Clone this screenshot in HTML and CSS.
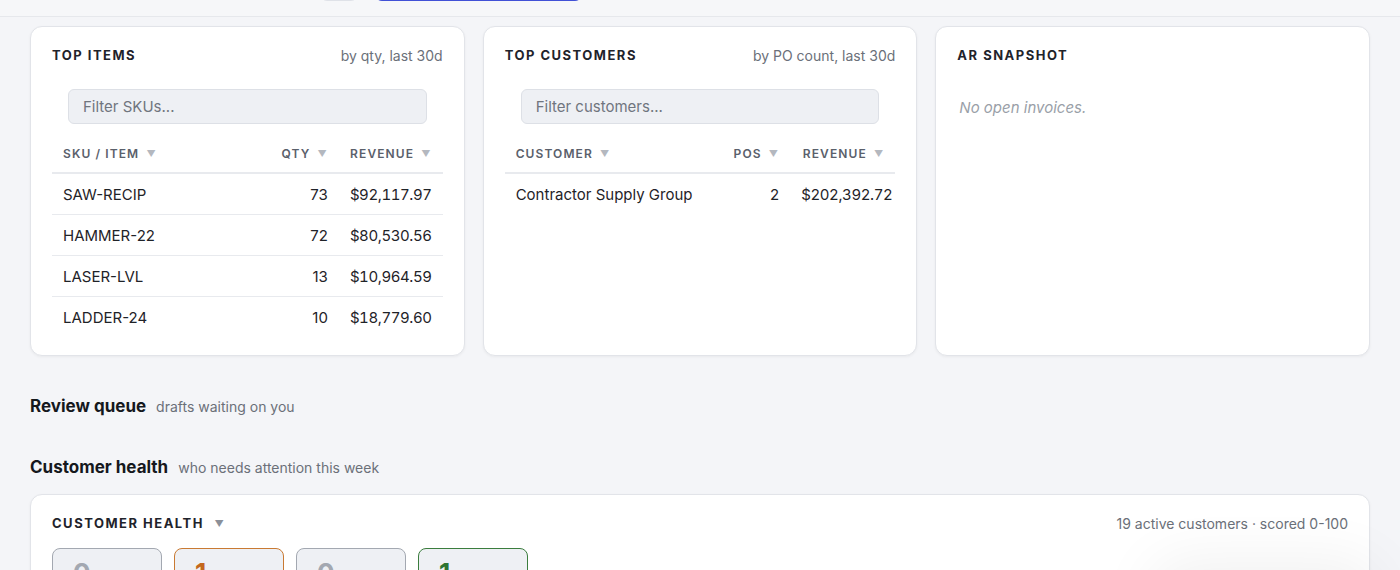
FILE: index.html
```html
<!DOCTYPE html>
<html lang="en">
<head>
    <meta charset="UTF-8">
    <meta name="viewport" content="width=device-width, initial-scale=1.0">
    <title>Sales Dashboard</title>
    <link rel="stylesheet" href="styles.css">
</head>
<body>

    <header class="topbar">
        <div class="topbar-actions">
            <button class="btn-ghost" type="button">↻</button>
            <button class="btn-primary" type="button">New purchase order</button>
        </div>
    </header>

    <main class="page">
        <div class="card-row">
            <section class="card">
                <div class="card-head">
                    <h3 class="card-title">Top items</h3>
                    <span class="card-note">by qty, last 30d</span>
                </div>
                <input class="filter" type="text" placeholder="Filter SKUs...">
                <table class="data">
                    <thead>
                        <tr>
                            <th>SKU / Item <span class="caret">▼</span></th>
                            <th class="num">Qty <span class="caret">▼</span></th>
                            <th class="num money">Revenue <span class="caret">▼</span></th>
                        </tr>
                    </thead>
                    <tbody>
                        <tr><td>SAW-RECIP</td><td class="num">73</td><td class="num money">$92,117.97</td></tr>
                        <tr><td>HAMMER-22</td><td class="num">72</td><td class="num money">$80,530.56</td></tr>
                        <tr><td>LASER-LVL</td><td class="num">13</td><td class="num money">$10,964.59</td></tr>
                        <tr><td>LADDER-24</td><td class="num">10</td><td class="num money">$18,779.60</td></tr>
                    </tbody>
                </table>
            </section>

            <section class="card">
                <div class="card-head">
                    <h3 class="card-title">Top customers</h3>
                    <span class="card-note">by PO count, last 30d</span>
                </div>
                <input class="filter" type="text" placeholder="Filter customers...">
                <table class="data tight">
                    <thead>
                        <tr>
                            <th>Customer <span class="caret">▼</span></th>
                            <th class="num">POs <span class="caret">▼</span></th>
                            <th class="num money">Revenue <span class="caret">▼</span></th>
                        </tr>
                    </thead>
                    <tbody>
                        <tr><td>Contractor Supply Group</td><td class="num">2</td><td class="num money">$202,392.72</td></tr>
                    </tbody>
                </table>
            </section>

            <section class="card">
                <div class="card-head">
                    <h3 class="card-title">AR snapshot</h3>
                </div>
                <p class="empty">No open invoices.</p>
            </section>
        </div>

        <div class="section-head review">
            <h2>Review queue</h2>
            <span>drafts waiting on you</span>
        </div>

        <div class="section-head health">
            <h2>Customer health</h2>
            <span>who needs attention this week</span>
        </div>

        <section class="card health-card">
            <div class="card-head">
                <h3 class="card-title">Customer health <span class="caret dark">▼</span></h3>
                <span class="card-note">19 active customers · scored 0-100</span>
            </div>
            <div class="tiles">
                <div class="tile grey"><b>0</b></div>
                <div class="tile orange"><b>1</b></div>
                <div class="tile grey"><b>0</b></div>
                <div class="tile green"><b>1</b></div>
            </div>
        </section>
    </main>

    <div class="toast"></div>

</body>
</html>
```

FILE: styles.css
```css
body {
    margin: 0;
    background: #f4f5f8;
    font-family: Inter, "Liberation Sans", Arial, sans-serif;
    color: #1f2328;
    overflow: hidden;
}
.topbar {
    height: 57px;
    margin-top: -40px;
    border-bottom: 1px solid #e6e8ec;
    background: #f6f7f9;
    box-sizing: border-box;
    padding: 6px 30px 0 320px;
}
.topbar-actions {
    display: flex;
    gap: 17px;
}
.btn-ghost {
    width: 38px;
    height: 35px;
    background: #fff;
    border: 1px solid #dfe2e8;
    border-radius: 7px;
    color: #555;
}
.btn-primary {
    width: 207px;
    height: 35px;
    background: #4151d6;
    border: none;
    border-radius: 7px;
    color: #fff;
    font-size: 14px;
}
.page {
    padding: 9px 30px 0;
}
.card-row {
    display: grid;
    grid-template-columns: repeat(3, 1fr);
    gap: 18px;
}
.card {
    background: #fff;
    border: 1px solid #e2e4e9;
    border-radius: 12px;
    box-shadow: 0 1px 3px rgba(0, 0, 0, 0.05);
    padding: 19px 21px 18px;
    height: 330px;
    box-sizing: border-box;
}
.card-head {
    display: flex;
    justify-content: space-between;
    align-items: center;
    height: 18px;
}
.card-title {
    margin: 0;
    font-size: 13px;
    font-weight: 700;
    letter-spacing: 1.5px;
    text-transform: uppercase;
    color: #1f232b;
}
.card-note {
    font-size: 14px;
    color: #6b7079;
}
.filter {
    display: block;
    box-sizing: border-box;
    width: calc(100% - 32px);
    height: 35px;
    margin: 25px 16px 0;
    padding: 0 14px;
    background: #eef0f4;
    border: 1px solid #dde0e6;
    border-radius: 6px;
    font-family: inherit;
    font-size: 15px;
    color: #333;
}
.filter::placeholder {
    color: #70757e;
}
.data {
    width: 100%;
    border-collapse: collapse;
    margin-top: 13px;
}
.data th {
    text-align: left;
    font-size: 12px;
    font-weight: 600;
    letter-spacing: 1.1px;
    text-transform: uppercase;
    color: #5a606b;
    padding: 9px 11px 11px;
    border-bottom: 2px solid #e8eaee;
    white-space: nowrap;
}
.data td {
    font-size: 15px;
    padding: 0 11px;
    height: 40px;
    border-bottom: 1px solid #e8eaee;
    color: #1f2328;
}
.data tbody tr:last-child td {
    border-bottom: none;
}
.data .num {
    text-align: right;
    width: 1%;
    white-space: nowrap;
}
.data td.money {
    font-variant-numeric: tabular-nums;
    letter-spacing: -0.4px;
}
.data.tight td.money {
    padding-right: 3px;
}
.caret {
    font-size: 9px;
    color: #b4b8bf;
    margin-left: 3px;
    vertical-align: 1px;
}
.caret.dark {
    color: #8b9099;
    margin-left: 6px;
}
.empty {
    margin: 34px 0 0 2px;
    font-size: 15px;
    font-style: italic;
    color: #9a9fa8;
}
.section-head {
    display: flex;
    align-items: baseline;
    gap: 10px;
}
.section-head h2 {
    margin: 0;
    font-size: 17px;
    font-weight: 700;
    color: #15181d;
}
.section-head span {
    font-size: 14px;
    color: #6b7079;
}
.review {
    margin-top: 40px;
}
.health {
    margin-top: 41px;
}
.health-card {
    margin-top: 17px;
    height: 200px;
}
.tiles {
    display: flex;
    gap: 12px;
    margin-top: 16px;
}
.tile {
    width: 110px;
    height: 80px;
    box-sizing: border-box;
    border: 1.5px solid #a3a8b1;
    border-radius: 8px;
    background: #eef0f4;
    padding: 8px 20px;
}
.tile b {
    font-size: 26px;
    font-weight: 700;
    color: #a3a8b1;
}
.tile.orange {
    border-color: #c97a33;
}
.tile.orange b {
    color: #c4681d;
}
.tile.green {
    border-color: #3b7d3e;
}
.tile.green b {
    color: #2e7532;
}
.toast {
    position: fixed;
    right: 40px;
    bottom: -70px;
    width: 190px;
    height: 60px;
    background: #fff;
    border-radius: 12px;
    box-shadow: 0 0 60px 20px rgba(0, 0, 0, 0.06);
}
```
